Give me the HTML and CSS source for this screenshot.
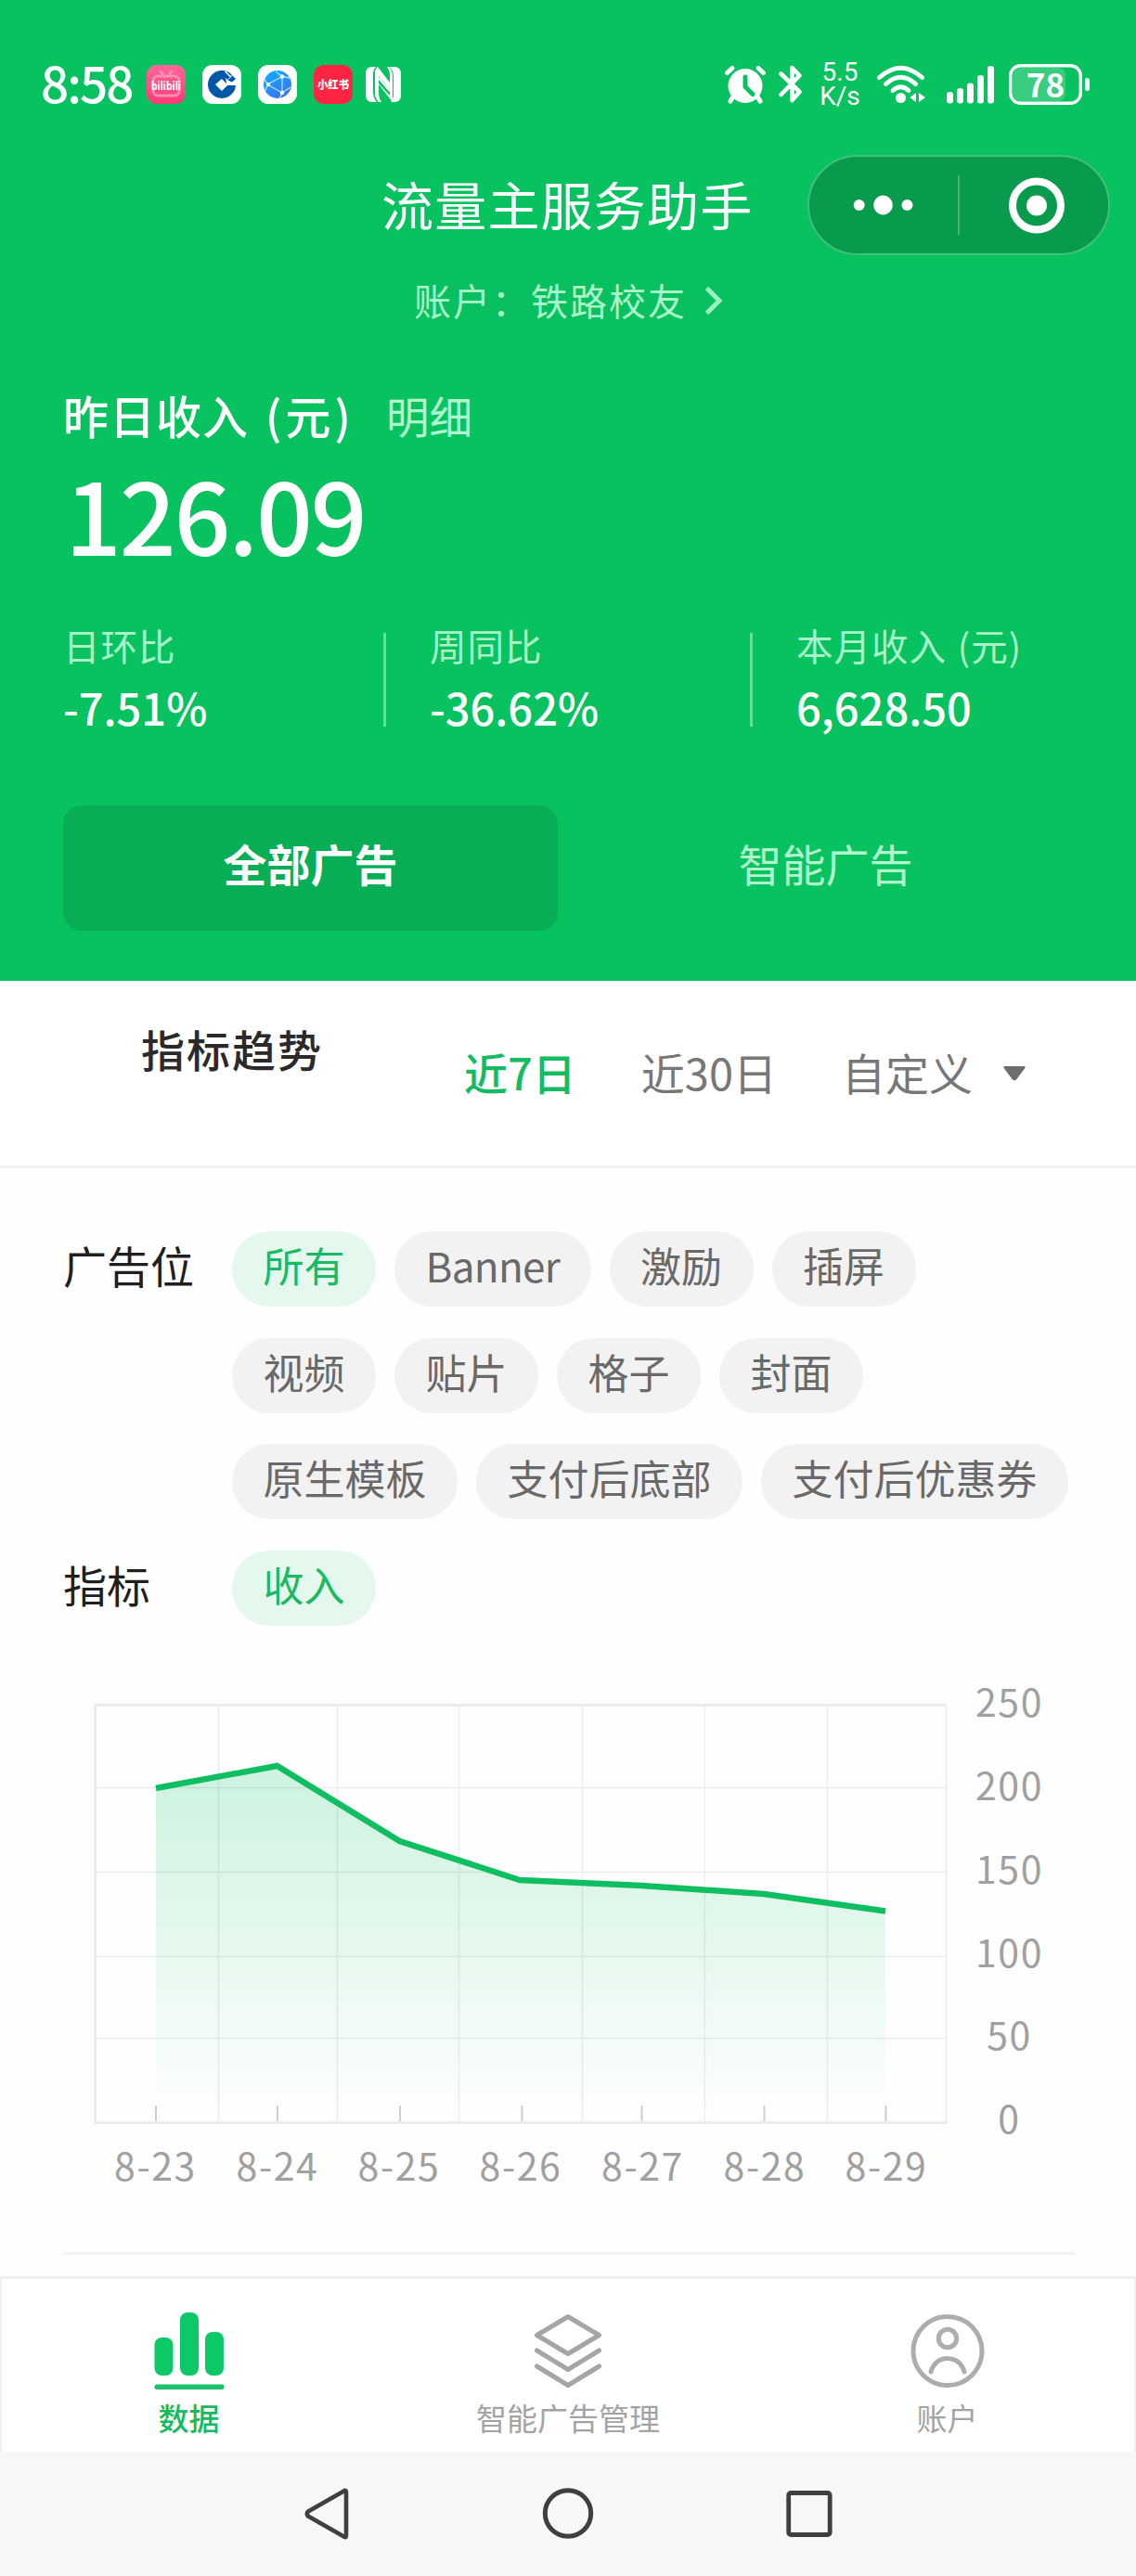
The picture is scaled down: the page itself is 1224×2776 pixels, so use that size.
FILE: index.html
```html
<!DOCTYPE html>
<html lang="zh-CN">
<head>
<meta charset="utf-8">
<title>流量主服务助手</title>
<link rel="stylesheet" href="styles.css">
</head>
<body>
<header class="hero">
  <div class="status">
    <span class="clock">8:58</span>
    <div class="apps">
      <svg width="42" height="42" viewBox="0 0 42 42">
        <defs><linearGradient id="pink" x1="0" y1="0" x2="0" y2="1"><stop offset="0" stop-color="#ff6699"/><stop offset="1" stop-color="#fb3a78"/></linearGradient></defs>
        <rect width="42" height="42" rx="11" fill="url(#pink)"/>
        <rect x="7" y="12" width="28" height="21" rx="5" fill="none" stroke="#ff8db2" stroke-width="3"/>
        <path d="M15 7l4 5M27 7l-4 5" stroke="#ff8db2" stroke-width="3" stroke-linecap="round"/>
        <text class="bili" x="21" y="27" text-anchor="middle" textLength="32" lengthAdjust="spacingAndGlyphs">bilibili</text>
      </svg>
      <svg width="42" height="42" viewBox="0 0 42 42">
        <rect width="42" height="42" rx="11" fill="#fff"/>
        <circle cx="21" cy="21" r="15" fill="#0059a8"/>
        <path d="M21 15l6 6h12v1l-12 0-6 6-7-7z" fill="#fff"/>
        <path d="M25 14l8-7 5 4v11H26.500z" fill="#fff"/>
        <path d="M20 6.100c5 0 9 1.500 12 5l-5 5-7-8z" fill="#0059a8"/>
        <path d="M24.500 6.800l8.500 8.500" stroke="#fff" stroke-width="1.600"/>
        <path d="M27.500 16.500l5-5 3.500 3.500-4 3.500z" fill="#0059a8"/>
      </svg>
      <svg width="42" height="42" viewBox="0 0 42 42">
        <defs><linearGradient id="sky" x1="0" y1="0" x2=".5" y2="1"><stop offset="0" stop-color="#0ab0ff"/><stop offset="1" stop-color="#3a76f2"/></linearGradient></defs>
        <rect width="42" height="42" rx="11" fill="#fff"/>
        <circle cx="21" cy="21" r="15" fill="url(#sky)"/>
        <path d="M10 21L26 12.500V30L10 21M7 15l3 6-2 7M19 7l7 5.500 8 1.500M35 24l-9 6-3 6" fill="none" stroke="#b5e2ff" stroke-width="1.300"/>
        <circle cx="11" cy="21" r="2.200" fill="#fff"/><circle cx="26" cy="12.500" r="2.200" fill="#fff"/><circle cx="26" cy="30" r="2.200" fill="#fff"/>
      </svg>
      <svg width="42" height="42" viewBox="0 0 42 42">
        <rect width="42" height="42" rx="11" fill="#ff2442"/>
        <text class="xhs" x="21" y="26" text-anchor="middle" textLength="34" lengthAdjust="spacingAndGlyphs">小红书</text>
      </svg>
      <svg class="nfc" width="38" height="38" viewBox="0 0 38 38">
        <path d="M11 0H7Q0 0 0 8v22q0 8 7 8h5Q8 34 8 27V8q0-5 3-8z" fill="#fff"/>
        <path d="M27 38h4q7 0 7-8V8q0-8-7-8h-5q4 4 4 11v19q0 5-3 8z" fill="#fff"/>
        <path d="M13 0L26 17V10q0-6-3-10h2q4 3 4 11v27L14 19v8q0 7 3 11h-3q-4-3-4-11V6q0-4 3-6z" fill="#fff"/>
        <path d="M14 10l12 14v7L14 18z" fill="#08c260"/>
        <path d="M14 12l12 14" stroke="#fff" stroke-width="2.500"/>
      </svg>
    </div>
    <div class="signals">
      <svg class="alarm" width="44" height="42" viewBox="0 0 44 42">
        <path d="M2.500 8.500L8 3.500M41.500 8.500L36 3.500" stroke="#fff" stroke-width="5" stroke-linecap="round"/>
        <path d="M9 34l-3 5M35 34l3 5" stroke="#fff" stroke-width="5" stroke-linecap="round"/>
        <circle cx="22" cy="22.500" r="18.500" fill="#fff"/>
        <path d="M22 13v10.500l8 8" fill="none" stroke="#08c260" stroke-width="5" stroke-linecap="round" stroke-linejoin="round"/>
      </svg>
      <svg class="bt" width="26" height="42" viewBox="0 0 26 42">
        <path d="M2.500 9.500L22.500 29l-8 9V3l8 8.500L2.500 32" fill="none" stroke="#fff" stroke-width="4.600" stroke-linecap="round" stroke-linejoin="round"/>
      </svg>
      <div class="rate"><span>5.5</span><span>K/s</span></div>
      <svg class="wifi" width="54" height="42" viewBox="0 0 54 42">
        <g fill="none" stroke="#fff" stroke-width="5" stroke-linecap="round">
          <path d="M3.500 13.500Q26.500-7 49.500 13.500"/><path d="M10.500 20.500Q26.500 6 42.500 20.500"/><path d="M18 27.500Q26.500 20 35 27.500"/>
        </g>
        <circle cx="26.500" cy="35.500" r="5.500" fill="#fff"/>
        <path d="M43 30v10l-6.500-5zM46 30v10l7-5z" fill="#fff"/>
      </svg>
      <svg class="bars" width="52" height="42" viewBox="0 0 52 42">
        <g fill="#fff"><rect y="29" width="7" height="12.500" rx="3.300"/><rect x="11" y="25" width="7" height="16.500" rx="3.300"/><rect x="22" y="19.500" width="7" height="22" rx="3.300"/><rect x="33" y="11" width="7" height="30.500" rx="3.300"/><rect x="44" y="1" width="7" height="40.500" rx="3.300"/></g>
      </svg>
      <svg width="88" height="44" viewBox="0 0 88 44">
        <rect x="4" y="4" width="57" height="36" rx="8" fill="#fff" fill-opacity=".2"/>
        <rect x="1.700" y="1.700" width="75.600" height="40.600" rx="11" fill="none" stroke="#fff" stroke-width="3.400"/>
        <rect x="82" y="15" width="5" height="14" rx="2.500" fill="#fff"/>
        <text class="level" x="39.500" y="35.500" text-anchor="middle">78</text>
      </svg>
    </div>
  </div>

  <div class="titlebar">
    <h1>流量主服务助手</h1>
    <svg class="capsule" width="326" height="109" viewBox="0 0 326 109">
      <rect x="1" y="1" width="324" height="106" rx="53" fill="#089a4d" stroke="#43bf7c" stroke-width="2"/>
      <path d="M163 22v64" stroke="#45b57a" stroke-width="2"/>
      <g fill="#fff"><circle cx="55.700" cy="54" r="6"/><circle cx="81.500" cy="54" r="10.400"/><circle cx="107.500" cy="54" r="6"/><circle cx="247" cy="54.500" r="11"/></g>
      <circle cx="247" cy="54.500" r="26" fill="none" stroke="#fff" stroke-width="8"/>
    </svg>
  </div>
  <div class="account">
    <span>账户：铁路校友</span>
    <svg width="20" height="34" viewBox="0 0 20 34"><path d="M2.500 3.500L16 17 2.500 30.500" fill="none" stroke="#9cf0c0" stroke-width="5"/></svg>
  </div>

  <div class="income"><strong>昨日收入 <span class="unit">(元)</span></strong><a>明细</a></div>
  <div class="amount">126.09</div>
  <div class="metrics">
    <div class="metric"><div class="label">日环比</div><div class="value">-7.51%</div></div>
    <div class="metric"><div class="label">周同比</div><div class="value">-36.62%</div></div>
    <div class="metric"><div class="label">本月收入 (元)</div><div class="value">6,628.50</div></div>
  </div>
  <div class="tabs"><div class="tab active">全部广告</div><div class="tab">智能广告</div></div>
</header>

<section class="trend">
  <h2>指标趋势</h2>
  <nav class="ranges">
    <span class="on">近7日</span><span>近30日</span><span>自定义</span>
    <svg width="26" height="17" viewBox="0 0 26 17"><path d="M2.500 1h21q2 .5.500 2.500L15 15.500q-2 1.500-4 0L2 3.500Q.5 1.500 2.500 1z" fill="#6d6d6d"/></svg>
  </nav>
</section>

<main class="panel">
  <div class="filter">
    <div class="name">广告位</div>
    <div class="chips">
      <span class="chip on">所有</span><span class="chip latin">Banner</span><span class="chip">激励</span><span class="chip">插屏</span>
    </div>
    <div class="chips">
      <span class="chip">视频</span><span class="chip">贴片</span><span class="chip">格子</span><span class="chip">封面</span>
    </div>
    <div class="chips">
      <span class="chip">原生模板</span><span class="chip">支付后底部</span><span class="chip">支付后优惠券</span>
    </div>
    <div class="name">指标</div>
    <div class="chips"><span class="chip on">收入</span></div>
  </div>

  <svg class="chart" width="1088" height="560" viewBox="68 1800 1088 560">
    <defs><linearGradient id="fade" gradientUnits="userSpaceOnUse" x1="0" y1="1903" x2="0" y2="2286"><stop offset="0" stop-color="#08c260" stop-opacity=".2"/><stop offset="1" stop-color="#08c260" stop-opacity="0"/></linearGradient></defs>
    <path d="M168 1927L298.500 1903 430.500 1984 560 2026 691 2032 823 2041 954 2059.500V2286H168z" fill="url(#fade)"/>
    <path class="grid" d="M235.500 1838V2286M363.500 1838V2286M494.500 1838V2286M627.500 1838V2286M759.500 1838V2286M891.500 1838V2286M1019.500 1837V2287M102 1926.500H1019M102 2017.500H1019M102 2108.500H1019M102 2196.500H1019"/>
    <path class="frame" d="M1020 1837.500H102.500V2287.500H1021"/>
    <path class="ticks" d="M168 2269V2286M299 2269V2286M431 2269V2286M562.500 2269V2286M691.500 2269V2286M823.500 2269V2286M954.500 2269V2286"/>
    <path class="line" d="M168 1927L298.500 1903 430.500 1984 560 2026 691 2032 823 2041 954 2059.500"/>
    <g class="axis">
      <text x="1087.500" y="1850">250</text><text x="1087.500" y="1940">200</text><text x="1087.500" y="2030">150</text><text x="1087.500" y="2120">100</text><text x="1087.500" y="2209">50</text><text x="1087.500" y="2299">0</text>
      <text x="167.500" y="2350">8-23</text><text x="299" y="2350">8-24</text><text x="430" y="2350">8-25</text><text x="561" y="2350">8-26</text><text x="692.500" y="2350">8-27</text><text x="824" y="2350">8-28</text><text x="955" y="2350">8-29</text>
    </g>
  </svg>
  <hr>
</main>

<nav class="tabbar">
  <div class="item on">
    <svg width="84" height="84" viewBox="0 0 84 84"><g fill="#0cc968"><rect x="4.500" y="28" width="20" height="41" rx="8"/><rect x="32" y="1" width="20" height="68" rx="8"/><rect x="59" y="22" width="20" height="47" rx="8"/></g><rect x="4.500" y="78.500" width="75" height="5.500" rx="2.500" fill="#1cc26b"/></svg>
    <span>数据</span>
  </div>
  <div class="item">
    <svg width="84" height="84" viewBox="0 0 84 84"><path d="M42 5.500L75.500 25.500 42 45.500 8.500 25.500zM8.500 42L42 62.500 75.500 42M8.500 59L42 79.500 75.500 59" fill="none" stroke="#a5a5a5" stroke-width="5" stroke-linecap="round" stroke-linejoin="round"/></svg>
    <span>智能广告管理</span>
  </div>
  <div class="item">
    <svg width="84" height="84" viewBox="0 0 84 84"><g fill="none" stroke="#adadad" stroke-width="5" stroke-linecap="round"><circle cx="42" cy="42.500" r="37"/><circle cx="42" cy="29" r="9.700"/><path d="M24 65C29 45.500 55 45.500 60 65"/></g></svg>
    <span>账户</span>
  </div>
</nav>
<footer class="softkeys">
  <svg width="48" height="56" viewBox="0 0 48 56"><path d="M42.500 3.500Q45 1.500 45 5V51Q45 54.500 42.500 52.500L4 30.500Q1.500 28 4 25.500z" fill="none" stroke="#3f3f3f" stroke-width="4.600" stroke-linejoin="round"/></svg>
  <svg width="56" height="56" viewBox="0 0 56 56"><circle cx="28" cy="27.500" r="24.700" fill="none" stroke="#3f3f3f" stroke-width="5"/></svg>
  <svg width="50" height="50" viewBox="0 0 50 50"><rect x="2.700" y="2.500" width="44.500" height="45" rx="2.500" fill="none" stroke="#3f3f3f" stroke-width="4.800"/></svg>
</footer>
</body>
</html>
```
FILE: styles.css
```css
* { box-sizing: border-box; }
body {
  margin: 0;
  width: 1224px;
  height: 2776px;
  display: flex;
  flex-direction: column;
  background: #fefefe;
  color: #1f1f1f;
  font-family: "Noto Sans CJK SC", sans-serif;
  overflow: hidden;
}
svg { display: block; flex: none; overflow: visible; }
h1, h2 { margin: 0; font-weight: 400; }
span, a, strong, .label, .value, .tab, h1, h2 { white-space: nowrap; }

.hero { height: 1057px; flex: none; background: #08c260; color: #fff; }

.status { display: flex; height: 118px; padding: 64px 49px 0 44px; align-items: center; }
.clock { width: 114px; font-size: 53px; font-weight: 500; line-height: 54px; letter-spacing: -2px; padding-bottom: 6px; }
.apps { display: flex; gap: 18px; align-items: center; }
.nfc { margin-left: -4px; }
.signals { display: flex; align-items: center; margin-left: auto; }
.alarm { margin-right: 14px; }
.bt { margin-right: 19px; }
.rate { display: flex; flex-direction: column; align-items: center; width: 42px; margin-right: 18px; font: 400 28px/26px Roboto, sans-serif; }
.wifi { margin-right: 22px; }
.bars { margin-right: 15px; }
.level { font: 700 35px "Noto Sans CJK SC", sans-serif; fill: #fff; }
.bili { font: 700 13px "Open Sans", sans-serif; fill: #fff; }
.xhs { font: 900 12px "Noto Sans CJK SC", sans-serif; fill: #fff; }

.titlebar { display: flex; align-items: center; justify-content: space-between; height: 109px; margin-top: 49px; padding: 0 28px 0 411px; }
.titlebar h1 { font-size: 56px; line-height: 80px; letter-spacing: 1.2px; padding-bottom: 6px; }

.account { display: flex; align-items: center; gap: 19px; width: 393px; height: 109px; margin: -10px 0 0 416px; padding: 6px 0 0 30px; background: #08c05f; color: #a9f5c9; font-size: 40px; line-height: 56px; letter-spacing: 2px; }
.account span { padding-bottom: 2px; }

.income { display: flex; gap: 34px; margin: 37px 0 0 68px; line-height: 70px; }
.income strong { font-size: 49px; font-weight: 500; letter-spacing: 1px; word-spacing: 6px; }
.income .unit { letter-spacing: 4px; }
.income a { font-size: 46.500px; color: #b0f5ce; }
.amount { margin: 16px 0 0 70px; font-size: 107px; line-height: 110px; font-weight: 500; letter-spacing: -2.200px; }

.metrics { display: grid; grid-template-columns: repeat(3, 395px); margin: 60px 0 0 68px; height: 124px; }
.metric { background: linear-gradient(#63e09b, #63e09b) 345px 14px / 3px 101px no-repeat; }
.metric:last-child { background: none; }
.label { font-size: 39.500px; line-height: 54px; letter-spacing: 1px; word-spacing: 2px; color: #aaf3c9; }
.value { margin-top: 10px; font-size: 47px; line-height: 60px; font-weight: 500; }

.tabs { display: grid; grid-template-columns: 533px 533px; gap: 22px; margin: 76px 0 0 68px; }
.tab { height: 135px; padding-bottom: 11px; border-radius: 20px; text-align: center; font-size: 47px; line-height: 124px; color: #b0f5ce; }
.tab.active { background: #07ae56; color: #fff; font-weight: 700; }

.trend { display: flex; flex: none; height: 202px; padding: 0 118px 0 152px; border-bottom: 3px solid #f1f1f1; background: #fff; }
.trend h2 { font-size: 47px; line-height: 70px; letter-spacing: 2px; font-weight: 500; color: #2a2a2a; margin-top: 38px; }
.ranges { display: flex; align-items: center; height: 70px; margin: 64px 0 0 auto; font-size: 47px; line-height: 66px; color: #777; }
.ranges span { margin-right: 70px; padding-bottom: 3px; }
.ranges span:nth-of-type(3) { margin-right: 32px; }
.ranges .on { color: #14bb61; font-weight: 500; }

.panel { flex: 1; padding: 68px 68px 0; }
.filter { display: grid; grid-template-columns: 182px 1fr; row-gap: 33.667px; }
.filter .chips { grid-column: 2; display: flex; gap: 20px; }
.name { font-size: 47px; line-height: 71px; }
.chip { height: 81px; padding: 0 33.500px; border-radius: 40px; background: #f2f2f2; color: #696969; font-size: 44px; line-height: 72px; }
.chip.on { background: #e4f8ee; color: #19ba63; }
.chip.latin { letter-spacing: -.7px; }
.chart { margin-top: 48px; }
.grid { fill: none; stroke: #000; stroke-opacity: .07; stroke-width: 1.500; }
.frame { fill: none; stroke: #ececee; stroke-width: 3; }
.ticks { stroke: #cfcfcf; stroke-width: 2; }
.line { fill: none; stroke: #10be62; stroke-width: 6.500; }
.axis { font: 400 41px "Noto Sans CJK SC", sans-serif; letter-spacing: 1.600px; fill: #a0a0a0; text-anchor: middle; }
hr { height: 3px; margin: 67px 0 0; border: 0; background: #f1f1f1; width: 1089px; }

.tabbar { display: grid; grid-template-columns: 403px 1fr 403px; flex: none; height: 189px; border: solid #f0f0f0; border-width: 3px 2px 0; background: #fff; }
.item { display: flex; flex-direction: column; align-items: center; padding-top: 35px; color: #a3a3a3; font-size: 33px; line-height: 50px; }
.item span { margin-top: 5px; }
.item.on { color: #14bb61; font-weight: 500; }

.softkeys { display: flex; align-items: center; flex: none; height: 134px; padding: 0 0 0 328px; background: #f7f7f7; }
.softkeys svg:nth-child(2) { margin: 0 207px 0 208px; }
```
